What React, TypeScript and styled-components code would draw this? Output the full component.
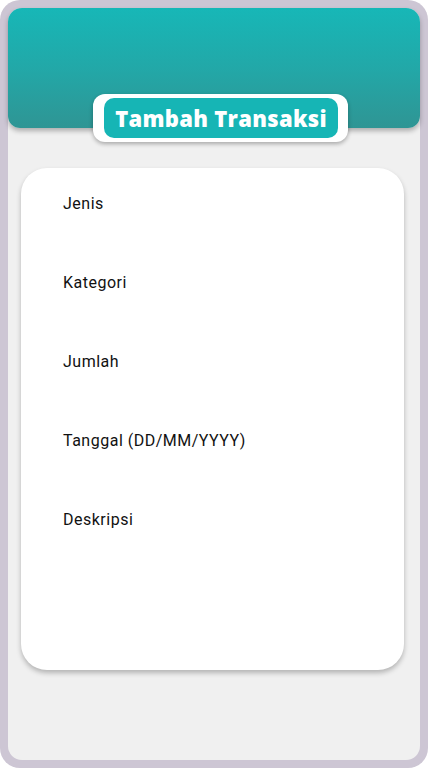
import React from "react";
import styled, { createGlobalStyle } from "styled-components";

const Global = createGlobalStyle`
  html, body { margin: 0; padding: 0; background: #ffffff; }
  #root { width: 428px; height: 768px; }
  * { box-sizing: border-box; }
`;

const Frame = styled.div`
  width: 428px;
  height: 768px;
  background: #cdc6d4;
  border-radius: 20px;
  padding: 8px;
`;

const Screen = styled.div`
  width: 100%;
  height: 100%;
  background: #f0f0f0;
  border-radius: 14px;
  display: flex;
  flex-direction: column;
`;

const Header = styled.header`
  height: 120px;
  flex: none;
  border-radius: 14px 14px 12px 12px;
  background: linear-gradient(180deg, #17b7b7 0%, #22a8a8 50%, #2f9594 100%);
  box-shadow: 0 3px 5px rgba(0, 0, 0, 0.28);
  display: flex;
  align-items: flex-end;
  justify-content: center;
  padding-left: 13px;
  position: relative;
  z-index: 1;
`;

const BadgeOuter = styled.div`
  background: #ffffff;
  border-radius: 12px;
  padding: 4px 10px 4px 11px;
  margin-bottom: -14px;
  box-shadow: 0 2px 4px rgba(0, 0, 0, 0.3);
`;

const BadgeInner = styled.h1`
  margin: 0;
  background: #16b5b5;
  border-radius: 10px;
  height: 40px;
  padding: 0 11px;
  display: flex;
  align-items: center;
  color: #ffffff;
  font-family: "Open Sans", sans-serif;
  font-weight: 800;
  font-size: 22px;
  letter-spacing: 0.3px;
`;

const Card = styled.section`
  margin: 40px 16px 0 13px;
  height: 502px;
  background: #ffffff;
  border-radius: 26px;
  box-shadow: 0 3px 5px rgba(0, 0, 0, 0.25);
  padding: 26px 42px;
  display: flex;
  flex-direction: column;
  gap: 60px;
`;

const Label = styled.div`
  font-family: Roboto, sans-serif;
  font-size: 16px;
  line-height: 19px;
  letter-spacing: 0.5px;
  color: #111111;
`;

const labels = ["Jenis", "Kategori", "Jumlah", "Tanggal (DD/MM/YYYY)", "Deskripsi"];

export default function App() {
  return (
    <>
      <Global />
      <Frame>
        <Screen>
          <Header>
            <BadgeOuter>
              <BadgeInner>Tambah Transaksi</BadgeInner>
            </BadgeOuter>
          </Header>
          <Card>
            {labels.map((l) => (
              <Label key={l}>{l}</Label>
            ))}
          </Card>
        </Screen>
      </Frame>
    </>
  );
}
